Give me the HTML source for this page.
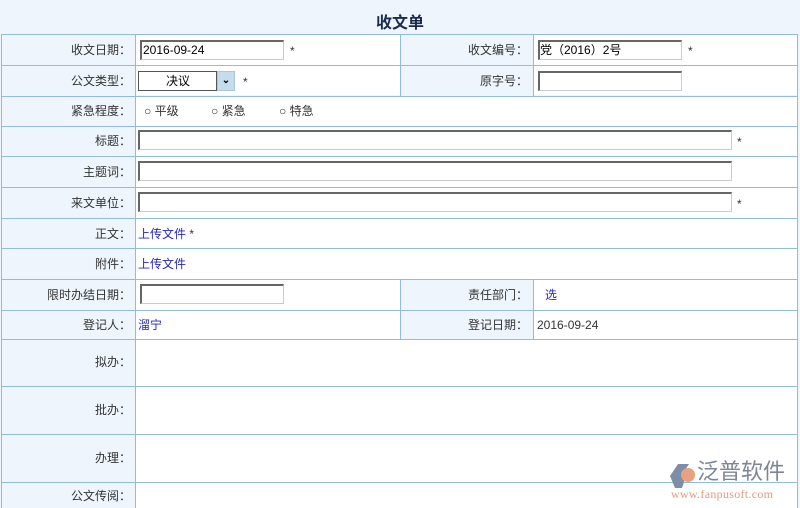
<!DOCTYPE html>
<html><head><meta charset="utf-8"><style>
body{margin:0;width:800px;height:508px;background:#eef5fd;font-family:"Liberation Sans","Noto Sans CJK SC",sans-serif;font-size:12px;color:#333;position:relative;overflow:hidden}
.a{position:absolute}
.h{position:absolute;left:1px;width:797px;height:1px;background:#8fbbe6}
.v{position:absolute;width:1px;background:#8fbbe6}
.w{position:absolute;background:#fff}
.l{position:absolute;text-align:right;line-height:14px}
.in{position:absolute;background:#fff;border:1px solid #ccc;border-top:2px solid #666;border-left:2px solid #666;height:15px;box-sizing:border-box}
.t{position:absolute;font-size:12px;line-height:14px;white-space:nowrap}
.lk{color:#2525c8}
</style></head><body>
<div class="a" style="left:0;top:9px;width:800px;text-align:center;font-size:16px;font-weight:bold;color:#1a2a4a">收文单</div>
<div class="w" style="left:136px;top:35px;width:264px;height:60px"></div>
<div class="w" style="left:534px;top:35px;width:263px;height:60px"></div>
<div class="w" style="left:136px;top:96px;width:661px;height:183px"></div>
<div class="w" style="left:136px;top:280px;width:264px;height:59px"></div>
<div class="w" style="left:534px;top:280px;width:263px;height:59px"></div>
<div class="w" style="left:136px;top:340px;width:661px;height:168px"></div>
<div class="h" style="top:34px"></div><div class="h" style="top:65px"></div><div class="h" style="top:96px"></div><div class="h" style="top:126px"></div><div class="h" style="top:156px"></div><div class="h" style="top:187px"></div><div class="h" style="top:218px"></div><div class="h" style="top:248px"></div><div class="h" style="top:279px"></div><div class="h" style="top:310px"></div><div class="h" style="top:339px"></div><div class="h" style="top:386px"></div><div class="h" style="top:434px"></div><div class="h" style="top:482px"></div>
<div class="v" style="left:1px;top:34px;height:474px"></div>
<div class="v" style="left:135px;top:34px;height:474px"></div>
<div class="v" style="left:797px;top:34px;height:474px"></div>
<div class="v" style="left:400px;top:34px;height:62px"></div>
<div class="v" style="left:533px;top:34px;height:62px"></div>
<div class="v" style="left:400px;top:279px;height:60px"></div>
<div class="v" style="left:533px;top:279px;height:60px"></div>
<div class="l" style="left:1px;width:130px;top:43px">收文日期：</div>
<div class="l" style="left:1px;width:130px;top:74px">公文类型：</div>
<div class="l" style="left:1px;width:130px;top:104px">紧急程度：</div>
<div class="l" style="left:1px;width:130px;top:134px">标题：</div>
<div class="l" style="left:1px;width:130px;top:165px">主题词：</div>
<div class="l" style="left:1px;width:130px;top:196px">来文单位：</div>
<div class="l" style="left:1px;width:130px;top:227px">正文：</div>
<div class="l" style="left:1px;width:130px;top:257px">附件：</div>
<div class="l" style="left:1px;width:130px;top:288px">限时办结日期：</div>
<div class="l" style="left:1px;width:130px;top:318px">登记人：</div>
<div class="l" style="left:1px;width:130px;top:355px">拟办：</div>
<div class="l" style="left:1px;width:130px;top:403px">批办：</div>
<div class="l" style="left:1px;width:130px;top:451px">办理：</div>
<div class="l" style="left:1px;width:130px;top:489px">公文传阅：</div>
<div class="l" style="left:400px;width:128px;top:43px">收文编号：</div>
<div class="l" style="left:400px;width:128px;top:74px">原字号：</div>
<div class="l" style="left:400px;width:128px;top:288px">责任部门：</div>
<div class="l" style="left:400px;width:128px;top:318px">登记日期：</div>
<div class="in" style="left:140px;top:40px;width:144px;height:20px"></div>
<div class="t" style="left:143px;top:43px;color:#000">2016-09-24</div>
<div class="t" style="left:290px;top:44px">*</div>
<div class="in" style="left:538px;top:40px;width:144px;height:20px"></div>
<div class="t" style="left:540px;top:43px;color:#000">党（2016）2号</div>
<div class="t" style="left:688px;top:44px">*</div>
<div class="in" style="left:538px;top:71px;width:144px;height:20px"></div>
<div class="a" style="left:138px;top:71px;width:79px;height:20px;background:#fff;border:1px solid #555;box-sizing:border-box"></div>
<div class="t" style="left:166px;top:74px;color:#000">决议</div>
<div class="a" style="left:217px;top:71px;width:18px;height:20px;background:#c5dcec;border:1px solid #a9c7df;box-sizing:border-box;font-size:10px;text-align:center;line-height:18px;font-weight:bold;color:#000">⌄</div>
<div class="t" style="left:243px;top:75px">*</div>
<div class="t" style="left:144px;top:104px">○ 平级</div>
<div class="t" style="left:211px;top:104px">○ 紧急</div>
<div class="t" style="left:279px;top:104px">○ 特急</div>
<div class="in" style="left:138px;top:130px;width:594px;height:20px"></div>
<div class="t" style="left:737px;top:135px">*</div>
<div class="in" style="left:138px;top:161px;width:594px;height:20px"></div>
<div class="in" style="left:138px;top:192px;width:594px;height:20px"></div>
<div class="t" style="left:737px;top:197px">*</div>
<div class="t lk" style="left:138px;top:227px">上传文件 <span style="color:#333">*</span></div>
<div class="t lk" style="left:138px;top:257px">上传文件</div>
<div class="in" style="left:140px;top:284px;width:144px;height:20px"></div>
<div class="t lk" style="left:545px;top:288px">选</div>
<div class="t lk" style="left:138px;top:318px">溜宁</div>
<div class="t" style="left:537px;top:318px">2016-09-24</div>
<svg class="a" style="left:669px;top:463px" width="30" height="26" viewBox="0 0 30 26"><path d="M9 1 L20 1 L12 13 L17 13 L13 25 L6 25 L1 13 Z" fill="#7d8fa8"/><circle cx="19" cy="12" r="7" fill="#e9a27f"/></svg>
<div class="t" style="left:697px;top:460px;font-size:22px;line-height:24px;color:#7d8696">泛普软件</div>
<div class="t" style="left:671px;top:487px;font-size:12px;color:#e29a7a;font-family:'Liberation Serif',serif;letter-spacing:0.3px">www.fanpusoft.com</div>
</body></html>
